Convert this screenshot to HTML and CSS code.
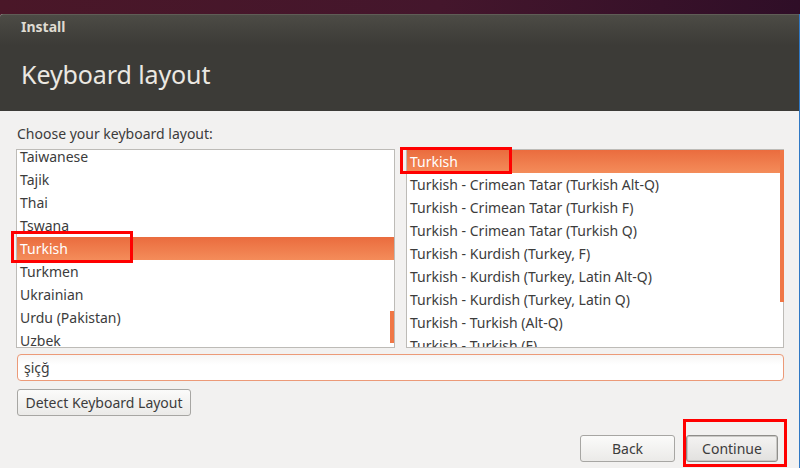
FILE: index.html
```html
<!DOCTYPE html>
<html>
<head>
<meta charset="utf-8">
<link rel="stylesheet" href="styles.css">
</head>
<body>
<div class="desktop">
  <div class="window">
    <div class="header">
      <div class="app-title">Install</div>
      <div class="page-title">Keyboard layout</div>
    </div>
    <div class="content">
      <div class="prompt">Choose your keyboard layout:</div>
      <div class="lists">
        <div class="list">
          <div class="rows rows-scrolled">
            <div class="row">Taiwanese</div>
            <div class="row">Tajik</div>
            <div class="row">Thai</div>
            <div class="row">Tswana</div>
            <div class="row selected">Turkish</div>
            <div class="row">Turkmen</div>
            <div class="row">Ukrainian</div>
            <div class="row">Urdu (Pakistan)</div>
            <div class="row">Uzbek</div>
          </div>
          <div class="thumb thumb-left"></div>
          <div class="mark mark-left"></div>
        </div>
        <div class="list">
          <div class="rows">
            <div class="row selected">Turkish</div>
            <div class="row">Turkish - Crimean Tatar (Turkish Alt-Q)</div>
            <div class="row">Turkish - Crimean Tatar (Turkish F)</div>
            <div class="row">Turkish - Crimean Tatar (Turkish Q)</div>
            <div class="row">Turkish - Kurdish (Turkey, F)</div>
            <div class="row">Turkish - Kurdish (Turkey, Latin Alt-Q)</div>
            <div class="row">Turkish - Kurdish (Turkey, Latin Q)</div>
            <div class="row">Turkish - Turkish (Alt-Q)</div>
            <div class="row">Turkish - Turkish (F)</div>
          </div>
          <div class="thumb thumb-right"></div>
          <div class="mark mark-right"></div>
        </div>
      </div>
      <div class="entry">şiçğ</div>
      <div class="detect-row"><button class="btn btn-detect">Detect Keyboard Layout</button></div>
      <div class="footer">
        <button class="btn btn-back">Back</button>
        <div class="continue-wrap">
          <button class="btn btn-continue">Continue</button>
          <div class="mark mark-continue"></div>
        </div>
      </div>
    </div>
  </div>
</div>
</body>
</html>
```

FILE: styles.css
```css
* { box-sizing: border-box; }
html, body { margin: 0; padding: 0; }
body {
  width: 800px;
  height: 468px;
  overflow: hidden;
  font-family: "Noto Sans", "DejaVu Sans", sans-serif;
  background: linear-gradient(100deg, #4a1728 0%, #44162c 50%, #2a0c26 100%);
}
.desktop {
  padding-top: 14px;
  height: 468px;
}
.window {
  height: 454px;
  border-right: 1px solid #2f78c4;
  border-top-left-radius: 3px;
  background: #f2f1f0;
  display: flex;
  flex-direction: column;
  overflow: hidden;
}
.header {
  height: 97px;
  flex: none;
  border-top: 1px solid #5f5d56;
  background: linear-gradient(to bottom, #4c4b45 0px, #3c3b37 30px, #3c3b37 100%);
  padding-left: 21px;
  display: flex;
  flex-direction: column;
}
.app-title {
  margin-top: 2px;
  font-size: 14px;
  font-weight: bold;
  color: #dfdbd2;
  line-height: 20px;
}
.page-title {
  margin-top: 21px;
  font-size: 25px;
  color: #ebe8e2;
  line-height: 32px;
  letter-spacing: -0.1px;
}
.content {
  flex: 1;
  padding: 0 15px 0 16px;
  display: flex;
  flex-direction: column;
  color: #3c3c3c;
  font-size: 14px;
}
.prompt {
  margin-top: 13px;
  line-height: 20px;
  padding-left: 1px;
  color: #3c3c3c;
}
.lists {
  margin-top: 5px;
  display: grid;
  grid-template-columns: 379px 378px;
  column-gap: 11px;
}
.list {
  position: relative;
  height: 199px;
  border: 1px solid #bdbbb7;
  background: #ffffff;
}
.list .rows { height: 197px; overflow: hidden; }
.rows-scrolled .row:first-child { margin-top: -5px; }
.row {
  height: 23px;
  line-height: 23px;
  padding-left: 3px;
  white-space: nowrap;
  color: #3c3c3c;
}
.row.selected {
  color: #ffffff;
  background: linear-gradient(to bottom, #ea6c3e, #f48c5a);
}
.thumb {
  position: absolute;
  width: 4px;
  background: #f07746;
}
.thumb-left { left: 373px; top: 161px; height: 32px; }
.thumb-right { left: 373px; top: 0; height: 152px; }
.mark {
  position: absolute;
  border: 3px solid #ff0000;
  pointer-events: none;
}
.mark-left { left: -6px; top: 81px; width: 122px; height: 32px; }
.mark-right { left: -7px; top: -3px; width: 112px; height: 27px; }
.entry {
  margin-top: 6px;
  margin-left: 1px;
  height: 27px;
  flex: none;
  border: 1px solid #ec9a78;
  border-radius: 4px;
  background: linear-gradient(to bottom, #f6f5f4, #ffffff 40%);
  padding-left: 6px;
  line-height: 25px;
  color: #3c3c3c;
}
.detect-row {
  margin-top: 8px;
  margin-left: 1px;
  display: flex;
}
.btn {
  font-family: inherit;
  font-size: 14px;
  color: #3c3c3c;
  height: 27px;
  border: 1px solid #a7a6a3;
  border-radius: 3px;
  background: linear-gradient(to bottom, #fbfbfa, #ebeae8);
  padding: 0 5px;
  margin: 0;
  white-space: nowrap;
}
.btn-detect { width: 174px; }
.footer {
  margin-top: 19px;
  display: flex;
  justify-content: flex-end;
  padding-right: 6px;
  gap: 11px;
}
.btn-back { width: 95px; }
.continue-wrap { position: relative; }
.btn-continue {
  width: 92px;
  border-color: #8f8e8b;
  background: linear-gradient(to bottom, #f4f3f2, #e2e1df);
  box-shadow: inset 0 0 0 1px #c9c8c5;
}
.mark-continue { left: -3px; top: -16px; width: 104px; height: 48px; }
```
